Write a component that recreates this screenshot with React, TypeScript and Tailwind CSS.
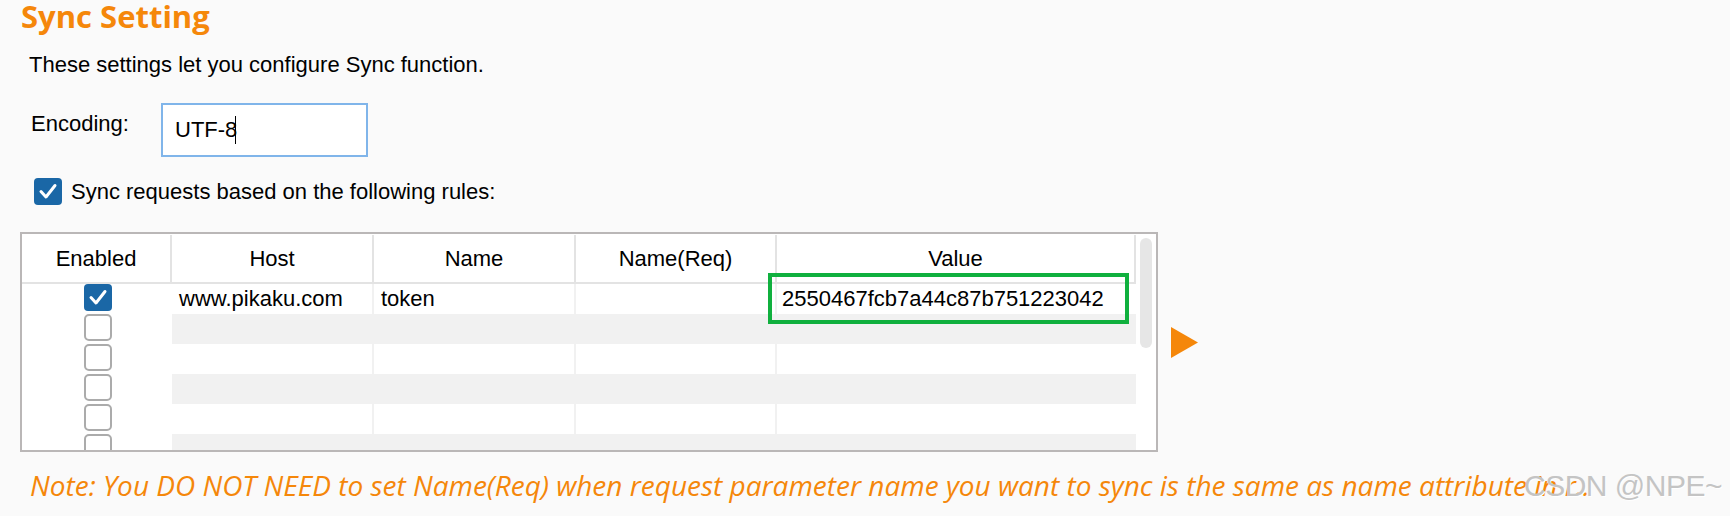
import type { ReactNode } from 'react';

type RuleRow = {
  enabled: boolean;
  host: string;
  name: string;
  nameReq: string;
  value: string;
};

const rules: RuleRow[] = [
  { enabled: true, host: 'www.pikaku.com', name: 'token', nameReq: '', value: '2550467fcb7a44c87b751223042' },
  { enabled: false, host: '', name: '', nameReq: '', value: '' },
  { enabled: false, host: '', name: '', nameReq: '', value: '' },
  { enabled: false, host: '', name: '', nameReq: '', value: '' },
  { enabled: false, host: '', name: '', nameReq: '', value: '' },
  { enabled: false, host: '', name: '', nameReq: '', value: '' },
];

const CheckBox = ({ checked }: { checked: boolean }) =>
  checked ? (
    <div className="flex h-[27px] w-[28px] items-center justify-center rounded-[4px] bg-[#1a67a6]">
      <svg fill="none" height="27" viewBox="0 0 28 27" width="28">
        <polyline points="7,13.5 12,19 21,7.5" stroke="#fff" strokeLinecap="round" strokeLinejoin="round" strokeWidth="3" />
      </svg>
    </div>
  ) : (
    <div className="h-[27px] w-[28px] rounded-[5px] border-2 border-[#ababab] bg-white" />
  );

const HeaderCell = ({ width, children }: { width: string; children: ReactNode }) => (
  <div className={`flex h-full items-center justify-center border-r-2 border-[#e3e3e3] ${width}`}>{children}</div>
);

export default function App() {
  return (
    <div className="relative h-[516px] w-[1730px] overflow-hidden bg-[#fafafa] font-['Liberation_Sans',sans-serif] text-black">
      <h1 className="pt-[1px] pl-[21px] font-['Open_Sans',sans-serif] font-bold text-[#f5870a] text-[31px] leading-[30px]">
        Sync Setting
      </h1>

      <p className="mt-[21px] pl-[29px] text-[22px] leading-[26px]">These settings let you configure Sync function.</p>

      <div className="mt-[25px] flex items-start pl-[31px]">
        <label className="mt-[8px] w-[130px] text-[22px] leading-[26px]" htmlFor="sync-encoding">
          Encoding:
        </label>
        <div
          className="flex h-[54px] w-[207px] items-center border-2 border-[#80b5ea] bg-white pl-[12px] text-[22px] leading-[26px]"
          id="sync-encoding"
        >
          <span>UTF-8</span>
          <span className="ml-[-2px] h-[28px] w-px bg-black" />
        </div>
      </div>

      <div className="mt-[21px] flex items-center gap-[9px] pl-[34px]">
        <CheckBox checked />
        <span className="text-[22px] leading-[26px]">Sync requests based on the following rules:</span>
      </div>

      <div className="mt-[27px] flex items-center pl-[20px]">
        <div className="relative flex h-[220px] w-[1138px] border-2 border-[#bab7b7] bg-white">
          <div className="flex w-[1114px] flex-col">
            <div className="flex h-[50px] border-b-2 border-[#e3e3e3] pt-[1px] text-[22px] leading-[26px]">
              <HeaderCell width="w-[150px]">Enabled</HeaderCell>
              <HeaderCell width="w-[202px]">Host</HeaderCell>
              <HeaderCell width="w-[202px]">Name</HeaderCell>
              <HeaderCell width="w-[201px]">Name(Req)</HeaderCell>
              <HeaderCell width="w-[359px]">Value</HeaderCell>
            </div>
            <div className="h-[166px] overflow-hidden">
              {rules.map((row, i) => (
                <div className="flex h-[30px] text-[22px] leading-[26px]" key={i}>
                  <div className="w-[150px] bg-white pl-[62px]">
                    <CheckBox checked={row.enabled} />
                  </div>
                  <div className={`flex w-[964px] ${i % 2 === 1 ? 'bg-[#f1f1f1]' : 'bg-white'}`}>
                    <div className="flex w-[202px] items-center border-r-2 border-[#f1f1f1] pl-[7px]">{row.host}</div>
                    <div className="flex w-[202px] items-center border-r-2 border-[#f1f1f1] pl-[7px]">{row.name}</div>
                    <div className="flex w-[201px] items-center border-r-2 border-[#f1f1f1] pl-[7px]">{row.nameReq}</div>
                    <div className="flex w-[359px] items-center pl-[5px]">{row.value}</div>
                  </div>
                </div>
              ))}
            </div>
          </div>
          <div className="w-[20px] bg-white">
            <div className="mt-[4px] ml-[4px] h-[110px] w-[12px] rounded-full bg-[#e6e6e6]" />
          </div>

          {/* highlight drawn over the Value cell */}
          <div className="absolute top-[39px] left-[746px] h-[51px] w-[361px] border-4 border-[#10b03e]" />
        </div>

        <svg className="ml-[13px]" height="31" viewBox="0 0 27 31" width="27">
          <polygon fill="#f5870a" points="0,0 27,15.5 0,31" />
        </svg>
      </div>

      <p className="mt-[18px] whitespace-nowrap pl-[30px] font-['Open_Sans',sans-serif] text-[#f5870a] text-[28px] italic leading-[30px]">
        Note: You DO NOT NEED to set Name(Req) when request parameter name you want to sync is the same as name attribute in r..
      </p>

      <span className="absolute top-[469px] left-[1524px] whitespace-nowrap text-[#c4c4c4] text-[30px] leading-[34px] tracking-[-0.5px] [text-shadow:1px_1px_0_#ffffff]">
        CSDN @NPE~
      </span>
    </div>
  );
}
